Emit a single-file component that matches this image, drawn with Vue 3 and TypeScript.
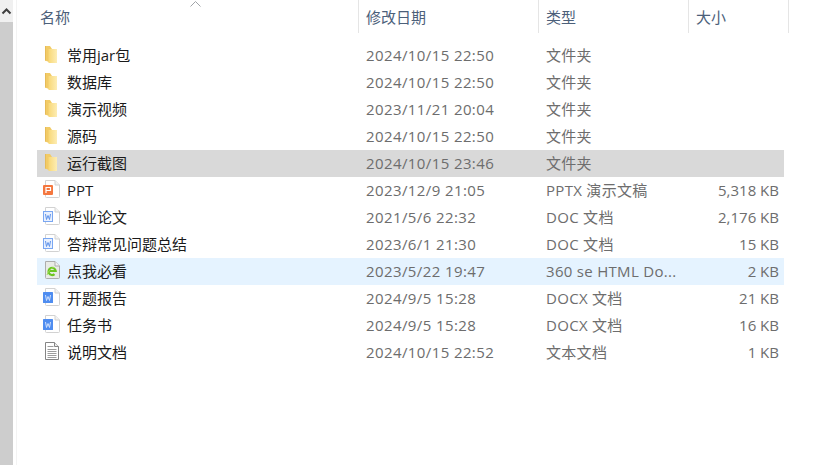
<template>
  <div class="window">
    <div class="scrollbar">
      <div class="scroll-btn">
        <svg width="13" height="9" viewBox="0 0 13 9"><path d="M2.500 6.500 6.500 2.500 10.500 6.500" fill="none" stroke="#404040" stroke-width="2" /></svg>
      </div>
    </div>
    <div class="pane">
      <div class="header">
        <div class="head-cell name">
          名称
          <svg class="sort" width="11" height="6" viewBox="0 0 11 6"><path d="M.5 5.500 5.500.5l5 5" fill="none" stroke="#a0a4a8" /></svg>
        </div>
        <div class="head-cell date">修改日期</div>
        <div class="head-cell type">类型</div>
        <div class="head-cell size">大小</div>
      </div>
      <div class="rows">
        <div v-for="f in files" :key="f.name" class="row" :class="f.state">
          <div class="cell name">
            <svg class="icon" width="18" height="20" viewBox="0 0 18 20">
              <defs>
                <linearGradient id="folderFront" x1="0" y1="0" x2="1" y2="0">
                  <stop offset="0" stop-color="#f8d878" />
                  <stop offset="1" stop-color="#fdedb4" />
                </linearGradient>
              </defs>
              <template v-if="f.icon === 'folder'">
                <path d="M2 2h5l2 3h5v13H6l-4-1.500z" fill="#f2cb66" />
                <path d="M5.500 5H14v14H5.500z" fill="url(#folderFront)" />
                <path d="M2 2h1v14.500H2z" fill="#e6bb58" />
              </template>
              <template v-else-if="f.icon === 'text'">
                <path d="M2.500 1.500h9l4 4v13h-13z" fill="#fff" stroke="#858585" />
                <path d="M11.500 1.500v4h4" fill="#eee" stroke="#858585" />
                <path d="M4.500 5.500h6M4.500 8.500h9M4.500 10.500h9M4.500 12.500h9M4.500 14.500h9M4.500 16.500h9" stroke="#9c9c9c" />
              </template>
              <template v-else>
                <path
                  d="M2.500 1.500h9.500l4.500 4.500v11.500a1 1 0 0 1-1 1h-12a1 1 0 0 1-1-1z"
                  :fill="f.icon === 'html' ? '#e9ebe6' : '#fff'"
                  :stroke="f.icon === 'html' ? '#adadad' : '#d2d2d2'"
                />
                <path d="M12 1.500V6h4.500" fill="#f2f2f2" :stroke="f.icon === 'html' ? '#adadad' : '#d2d2d2'" />
                <template v-if="f.icon === 'ppt'">
                  <rect x="0" y="6" width="10" height="10" rx="1" fill="#f4773f" />
                  <path d="M3 14V8.500h4.500v3H3" fill="none" stroke="#fff" stroke-width="1.200" />
                </template>
                <template v-else-if="f.icon === 'doc'">
                  <rect x=".5" y="5.500" width="9" height="10" fill="#e8f0fe" stroke="#7aa7f2" />
                  <path d="M2.500 8l1 5.500 1.500-4 1.500 4 1-5.500" fill="none" stroke="#5f93ea" />
                </template>
                <template v-else-if="f.icon === 'docx'">
                  <rect x="0" y="5" width="10" height="11" rx=".5" fill="#4f8df0" />
                  <path d="M2.500 8l1 5.500 1.500-4 1.500 4 1-5.500" fill="none" stroke="#cfe0fc" />
                </template>
                <template v-else>
                  <path
                    d="M5.500 11h7.200a3.600 3.600 0 1 0-1.200 3.200"
                    fill="none"
                    stroke="#6cc623"
                    stroke-width="2.200"
                  />
                  <path d="M4 15c1-3 3-6 7-8" fill="none" stroke="#9fdc5a" />
                </template>
              </template>
            </svg>
            <span class="label">{{ f.name }}</span>
          </div>
          <div class="cell date">{{ f.date }}</div>
          <div class="cell type">{{ f.type }}</div>
          <div class="cell size">{{ f.size }}</div>
        </div>
      </div>
    </div>
  </div>
</template>

<script setup lang="ts">
type FileRow = {
  name: string;
  date: string;
  type: string;
  size: string;
  icon: 'folder' | 'ppt' | 'doc' | 'docx' | 'html' | 'text';
  state?: 'selected' | 'hover';
};

const files: FileRow[] = [
  { name: '常用jar包', date: '2024/10/15 22:50', type: '文件夹', size: '', icon: 'folder' },
  { name: '数据库', date: '2024/10/15 22:50', type: '文件夹', size: '', icon: 'folder' },
  { name: '演示视频', date: '2023/11/21 20:04', type: '文件夹', size: '', icon: 'folder' },
  { name: '源码', date: '2024/10/15 22:50', type: '文件夹', size: '', icon: 'folder' },
  { name: '运行截图', date: '2024/10/15 23:46', type: '文件夹', size: '', icon: 'folder', state: 'selected' },
  { name: 'PPT', date: '2023/12/9 21:05', type: 'PPTX 演示文稿', size: '5,318 KB', icon: 'ppt' },
  { name: '毕业论文', date: '2021/5/6 22:32', type: 'DOC 文档', size: '2,176 KB', icon: 'doc' },
  { name: '答辩常见问题总结', date: '2023/6/1 21:30', type: 'DOC 文档', size: '15 KB', icon: 'doc' },
  { name: '点我必看', date: '2023/5/22 19:47', type: '360 se HTML Do...', size: '2 KB', icon: 'html', state: 'hover' },
  { name: '开题报告', date: '2024/9/5 15:28', type: 'DOCX 文档', size: '21 KB', icon: 'docx' },
  { name: '任务书', date: '2024/9/5 15:28', type: 'DOCX 文档', size: '16 KB', icon: 'docx' },
  { name: '说明文档', date: '2024/10/15 22:52', type: '文本文档', size: '1 KB', icon: 'text' },
];
</script>

<style>
html,
body {
  margin: 0;
  background: #fff;
}
</style>

<style scoped>
.window {
  display: flex;
  width: 836px;
  height: 465px;
  overflow: hidden;
  background: #fff;
  font-family: "Open Sans", "Noto Sans CJK SC", sans-serif;
  font-size: 15px;
}
.scrollbar {
  flex: none;
  width: 13px;
  background: #cdcdcd;
}
.scroll-btn {
  display: flex;
  align-items: center;
  justify-content: center;
  height: 22px;
  background: #f0f0f0;
}
.pane {
  flex: none;
  width: 771px;
  margin-left: 3px;
  padding-left: 20px;
  border-left: 1px solid #f3f3f3;
  box-sizing: border-box;
}
.header {
  position: relative;
  display: flex;
  height: 33px;
  margin-bottom: 9px;
  color: #4c607a;
}
.head-cell {
  display: flex;
  align-items: center;
  flex: none;
  height: 33px;
  padding-left: 7px;
  box-sizing: border-box;
  border-right: 1px solid #e5e5e5;
}
.head-cell.name {
  padding-left: 3px;
}
.sort {
  position: absolute;
  top: 1px;
  left: 153px;
}
.name {
  width: 322px;
}
.date {
  width: 180px;
}
.type {
  width: 150px;
}
.size {
  width: 100px;
}
.rows {
  width: 747px;
}
.row {
  display: flex;
  align-items: center;
  height: 27px;
  line-height: 25px;
  color: #6d6d6d;
}
.row.selected {
  background: #d9d9d9;
}
.row.hover {
  background: #e5f3ff;
}
.cell {
  flex: none;
  padding-left: 7px;
  box-sizing: border-box;
  white-space: nowrap;
}
.cell.date {
  letter-spacing: 0.4px;
}
.cell.type {
  letter-spacing: 0.3px;
}
.cell.name {
  display: flex;
  align-items: center;
  gap: 6px;
  padding-left: 6px;
  color: #1a1a1a;
}
.cell.size {
  width: 95px;
  padding: 0 5px 0 0;
  text-align: right;
}
.icon {
  flex: none;
  margin-bottom: 3px;
}
</style>
